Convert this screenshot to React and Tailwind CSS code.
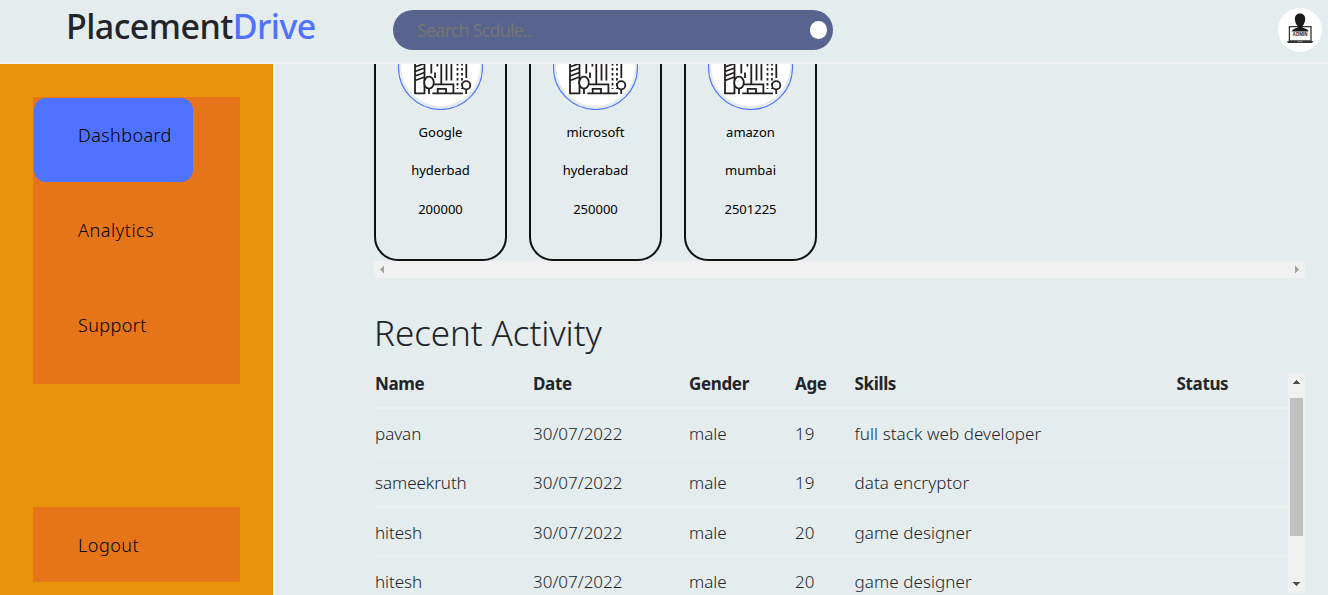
const companies = [
  { name: "Google", city: "hyderbad", salary: "200000" },
  { name: "microsoft", city: "hyderabad", salary: "250000" },
  { name: "amazon", city: "mumbai", salary: "2501225" },
];

const rows = [
  { name: "pavan", age: "19", skills: "full stack web developer", line: "h-[49px] border-b" },
  { name: "sameekruth", age: "19", skills: "data encryptor", line: "h-[50px] border-b-2" },
  { name: "hitesh", age: "20", skills: "game designer", line: "h-[49px] border-b" },
  { name: "hitesh", age: "20", skills: "game designer", line: "h-[50px]" },
];

const columns = "grid grid-cols-[158px_156px_106px_59.5px_322px_1fr] border-[#f0f0f0] pl-px";

function CityIcon() {
  return (
    <svg width="85" height="85" viewBox="0 0 85 85" fill="none" stroke="#231f20" strokeWidth="1.8">
      <circle cx="42.5" cy="42.5" r="42" fill="#e4ecee" stroke="#4f73ff" strokeWidth="1.1" />
      <circle cx="42.5" cy="41.5" r="39.5" fill="#fff" stroke="none" />
      <path d="M17 25V68.4H26.5V25M17 42l9.5-3.5M17 46.5l9.5-3.5M17 51l9.5-3.5M17 55.5l9.5-3.5" />
      <path d="M33.3 30V48.5M43.3 30V59M48.5 30V55.5M53.4 30V55.5M37 47.5V53" />
      <path d="M39.4 39V44M59.5 38V64M64 38V64" strokeDasharray="2.6 2.4" />
      <path d="M68.3 30V53" />
      <path d="M35 59.4H55.4V68.4M39.7 68V63.8H48V68M34.3 68.4H65" />
      <ellipse cx="31" cy="57.6" rx="4.8" ry="6" fill="#fff" />
      <path d="M31 63.5V69" />
      <circle cx="68.2" cy="60.3" r="4.1" fill="#fff" />
      <path d="M68.2 64.5V69" />
    </svg>
  );
}

function AdminIcon() {
  return (
    <svg width="44" height="44" viewBox="0 0 44 44" className="rounded-full bg-white">
      <path d="M11.4 18.6H33V33H11.4Z" fill="#fff" stroke="#333" strokeWidth="1.3" />
      <path d="M22 5.5c3.5 0 5.4 2.4 5.2 6c-.2 3-1.4 5.2-2.6 6.3v2c2.4.8 5.3 1.3 5.8 3.6H13.8c.5-2.3 3.2-2.8 5.8-3.6v-2c-1.4-1.3-2.5-3.4-2.7-6.3c-.2-3.6 1.7-6 5.1-6Z" fill="#1a1a1a" />
      <text x="22.1" y="27.9" textAnchor="middle" fontSize="5" fontWeight="700" textLength="15" lengthAdjust="spacingAndGlyphs" fontFamily="Liberation Sans, sans-serif" fill="#222">ADMIN</text>
      <path d="M9 33H35.2L34 34.9H10Z" fill="#333" />
      <path d="M19.5 33h5v.8h-5z" fill="#aaa" />
    </svg>
  );
}

function Arrow({ d, color }) {
  return (
    <svg width="17" height="17" viewBox="0 0 17 17" fill={color} shapeRendering="crispEdges" className="shrink-0">
      <path d={d} />
    </svg>
  );
}

export default function App() {
  return (
    <div className="flex h-[595px] w-full flex-col overflow-hidden bg-[#e4ecee] font-['Noto_Sans','Open_Sans',sans-serif] font-light text-[#212529]">
      <header className="flex h-16 shrink-0 items-start border-b-2 border-[#f0f0f0] pr-1.5">
        <h1 className="ml-[66px] mt-[3px] w-[327px] whitespace-nowrap text-[34px] font-medium leading-[46px] tracking-[-0.55px]">
          Placement<span className="text-[#4f73ff]">Drive</span>
        </h1>
        <div className="mt-2.5 flex h-10 w-[440px] items-center justify-between rounded-full bg-[#57648f] pl-6 pr-[6px]">
          <span className="text-[18px] font-normal tracking-[-0.85px] text-[#757575]">Search Scdule..</span>
          <span className="h-[18px] w-[17px] rounded-full bg-white" />
        </div>
        <div className="ml-auto mt-2">
          <AdminIcon />
        </div>
      </header>
      <div className="flex min-h-0 flex-1">
        <aside className="flex w-[275px] shrink-0 flex-col border-r-2 border-[#f8f8f8] bg-[#ea910a] px-[33px] pt-[33px] text-[18px] tracking-[0.4px] text-black">
          <nav className="flex h-[287px] w-[207px] flex-col bg-[#e57518] pl-px pt-px leading-7">
            <a className="h-[84px] w-[159px] rounded-xl bg-[#4f73ff] pl-11 pt-[23px]">Dashboard</a>
            <a className="mt-[11px] h-[84px] pl-11 pt-[23px] tracking-[0.55px]">Analytics</a>
            <a className="mt-[11px] h-[84px] pl-11 pt-[23px]">Support</a>
          </nav>
          <a className="mt-[123px] h-[75px] w-[207px] bg-[#e57518] pl-[45px] pt-6 leading-7 tracking-[0.5px]">Logout</a>
        </aside>
        <main className="flex min-w-0 flex-1 flex-col pl-[99px] pr-[23px]">
          <section className="flex h-[197px] shrink-0 items-end gap-[22px] overflow-hidden">
            {companies.map((c) => (
              <article key={c.name} className="flex h-[260px] w-[133px] shrink-0 flex-col items-center rounded-[24px] border-2 border-[#111] pt-[22px] text-[13px] font-normal text-black">
                <CityIcon />
                <p className="mt-3 leading-5">{c.name}</p>
                <p className="mt-[18px] leading-5">{c.city}</p>
                <p className="mt-[19px] leading-5">{c.salary}</p>
              </article>
            ))}
          </section>
          <div className="flex h-[17px] shrink-0 justify-between bg-[#f0f0f0]">
            <Arrow d="M6 8.5L10 5V12Z" color="#a3a3a3" />
            <Arrow d="M11 8.5L7 5V12Z" color="#a3a3a3" />
          </div>
          <h2 className="mt-[31px] h-16 whitespace-nowrap text-[35px] leading-[48px] tracking-[-0.08px]">Recent Activity</h2>
          <div className="flex h-[220px] shrink-0">
            <div className="h-[222px] min-w-0 flex-1 overflow-hidden text-[17px] leading-6">
              <div className={`${columns} h-9 border-b-2 font-bold leading-[22px] tracking-[-0.35px]`}>
                <span>Name</span>
                <span>Date</span>
                <span>Gender</span>
                <span>Age</span>
                <span>Skills</span>
                <span>Status</span>
              </div>
              {rows.map((r, i) => (
                <div key={i} className={`${columns} ${r.line} pt-[13px]`}>
                  <span className="tracking-[-0.05px]">{r.name}</span>
                  <span>30/07/2022</span>
                  <span>male</span>
                  <span>{r.age}</span>
                  <span className="tracking-[0.08px]">{r.skills}</span>
                </div>
              ))}
            </div>
            <div className="flex h-[220px] w-[17px] flex-col bg-[#f0f0f0]">
              <Arrow d="M8.5 7L12 11H5Z" color="#505050" />
              <div className="mx-auto mt-2 h-[138px] w-[13px] bg-[#c1c1c1]" />
              <div className="mt-auto">
                <Arrow d="M5 6H12L8.5 10Z" color="#505050" />
              </div>
            </div>
          </div>
        </main>
      </div>
    </div>
  );
}
